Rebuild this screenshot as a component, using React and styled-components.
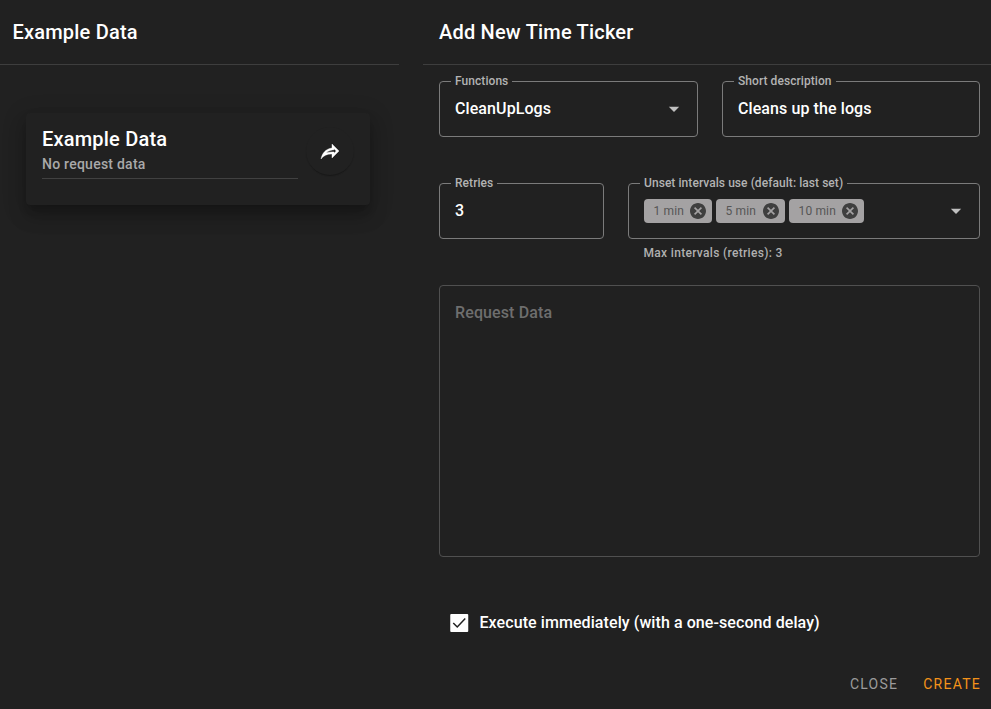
import React, { useState } from "react";
import styled, { createGlobalStyle } from "styled-components";

const GlobalStyle = createGlobalStyle`
  *, *::before, *::after { box-sizing: border-box; }
  body {
    margin: 0;
    background: #212121;
    color: #fff;
    font-family: Roboto, "Liberation Sans", sans-serif;
    overflow: hidden;
  }
`;

const Dialog = styled.main`
  display: grid;
  grid-template-columns: 399px 568px;
  column-gap: 24px;
  height: 709px;
  background: #212121;
`;

const Panel = styled.section`
  display: flex;
  flex-direction: column;
`;

const PanelHeader = styled.header`
  display: flex;
  align-items: center;
  height: 65px;
  padding: 0 ${(p) => p.$inset}px;
  border-bottom: 1px solid #3e3e3e;
`;

const Title = styled.h2`
  margin: 0;
  font-size: 20px;
  line-height: 32px;
  font-weight: 500;
  letter-spacing: 0.2px;
`;

const ExampleCard = styled.article`
  display: flex;
  align-items: flex-start;
  width: 344px;
  height: 92px;
  margin: 48px 0 0 26px;
  padding: 10px 16px;
  border-radius: 4px;
  background: #212121;
  box-shadow: 0 7px 8px -4px rgba(0, 0, 0, 0.2), 0 12px 17px 2px rgba(0, 0, 0, 0.14),
    0 5px 22px 4px rgba(0, 0, 0, 0.12);
`;

const ExampleText = styled.div`
  width: 256px;
  height: 56px;
  border-bottom: 1px solid #414141;
`;

const Subtitle = styled.p`
  margin: -1px 0 0;
  font-size: 14px;
  line-height: 20px;
  font-weight: 500;
  letter-spacing: 0.25px;
  color: #a9a9a9;
`;

const ShareButton = styled.button`
  display: grid;
  place-items: center;
  width: 48px;
  height: 48px;
  margin: 4px 0 0 8px;
  padding: 0;
  border: 0;
  border-radius: 50%;
  background: #212121;
  color: #fff;
  box-shadow: 0 2px 1px -1px rgba(0, 0, 0, 0.2), 0 1px 1px rgba(0, 0, 0, 0.1);
`;

const Form = styled.form`
  display: flex;
  flex-direction: column;
  padding: 16px 11px 0 16px;
`;

const FieldRow = styled.div`
  display: grid;
  grid-template-columns: ${(p) => p.$columns};
  column-gap: 24px;
  margin-bottom: 46px;
`;

const Field = styled.div`
  position: relative;
  display: flex;
  align-items: center;
  height: 56px;
  padding: 0 11px 0 15px;
  border: 1px solid #7b7b7b;
  border-radius: 4px;
`;

const FieldLabel = styled.label`
  position: absolute;
  top: -9px;
  left: 11px;
  padding: 0 4px;
  background: #212121;
  color: #b3b3b3;
  font-size: 12px;
  line-height: 16px;
  font-weight: 500;
  letter-spacing: 0.06px;
  white-space: nowrap;
`;

const FieldValue = styled.span`
  flex: 1;
  font-size: 16px;
  line-height: 24px;
  font-weight: 500;
  letter-spacing: 0.09px;
`;

const Caret = styled.svg`
  display: block;
  flex: none;
  width: 24px;
  height: 24px;
  fill: #c0c0c0;
`;

const Chips = styled.div`
  display: flex;
  flex: 1;
  gap: 4px;
`;

const Chip = styled.span`
  display: flex;
  align-items: center;
  justify-content: space-between;
  width: ${(p) => p.$width}px;
  height: 24px;
  padding: 0 6px 0 9.5px;
  border-radius: 4px;
  background: #a4a2a3;
  color: #565656;
  font-size: 12px;
  line-height: 20px;
  letter-spacing: 0.15px;
`;

const ChipIcon = styled.svg`
  width: 16px;
  height: 16px;
  fill: #3f3f3f;
`;

const Hint = styled.p`
  margin: -40px 0 0;
  padding-left: 204.5px;
  font-size: 12px;
  line-height: 16px;
  font-weight: 500;
  letter-spacing: 0.32px;
  color: #b0b0b0;
`;

const RequestArea = styled.textarea`
  display: block;
  width: 100%;
  height: 272px;
  margin: 24px 0 0;
  padding: 15px;
  border: 1px solid #505050;
  border-radius: 4px;
  background: transparent;
  color: #fff;
  font: 500 16px/24px Roboto, sans-serif;
  letter-spacing: 0.12px;
  resize: none;
  outline: none;
  &::placeholder { color: #6e6e6e; opacity: 1; }
`;

const CheckRow = styled.label`
  display: flex;
  align-items: center;
  gap: 8px;
  height: 24px;
  margin: 54px 0 0 8px;
  font-size: 16px;
  font-weight: 500;
`;

const CheckIcon = styled.svg`
  width: 24.5px;
  height: 24px;
`;

const CheckText = styled.span`
  line-height: 24px;
  letter-spacing: 0.08px;
`;

const Actions = styled.footer`
  display: flex;
  justify-content: flex-end;
  gap: 26px;
  margin: 37px 11px 0 0;
`;

const ActionButton = styled.button`
  padding: 0;
  border: 0;
  background: none;
  color: ${(p) => p.$color};
  font: 400 14px/24px Roboto, sans-serif;
  letter-spacing: 1.25px;
  margin-right: -1px;
`;

function DropdownCaret() {
  return (
    <Caret viewBox="0 0 24 24"><path d="M6.8,9.7L12,15L17.2,9.7H6.8Z" /></Caret>
  );
}

const intervals = [
  { label: "1 min", width: 68 },
  { label: "5 min", width: 69 },
  { label: "10 min", width: 75 },
];

export default function App() {
  const [request, setRequest] = useState("");
  return (
    <>
      <GlobalStyle />
      <Dialog>
        <Panel>
          <PanelHeader $inset={12.5}><Title>Example Data</Title></PanelHeader>
          <ExampleCard>
            <ExampleText>
              <Title>Example Data</Title>
              <Subtitle>No request data</Subtitle>
            </ExampleText>
            <ShareButton type="button" aria-label="Use example">
              <svg width="24" height="24" viewBox="0 0 24 24" fill="currentColor" stroke="currentColor" strokeWidth="0.4">
                <path d="M14,5V9C7,10 4,15 3,20C5.5,16.5 9,14.9 14,14.9V19L21,12L14,5M16,9.83L18.17,12L16,14.17V12.9H14C11.93,12.9 10.07,13.28 8.34,13.85C9.74,12.46 11.54,11.37 14.28,11L16,10.73V9.83Z" />
              </svg>
            </ShareButton>
          </ExampleCard>
        </Panel>
        <Panel>
          <PanelHeader $inset={16}><Title>Add New Time Ticker</Title></PanelHeader>
          <Form>
            <FieldRow $columns="259px 258px">
              <Field>
                <FieldLabel>Functions</FieldLabel>
                <FieldValue>CleanUpLogs</FieldValue>
                <DropdownCaret />
              </Field>
              <Field>
                <FieldLabel>Short description</FieldLabel>
                <FieldValue>Cleans up the logs</FieldValue>
              </Field>
            </FieldRow>
            <FieldRow $columns="165px 352px">
              <Field>
                <FieldLabel>Retries</FieldLabel>
                <FieldValue>3</FieldValue>
              </Field>
              <Field>
                <FieldLabel>Unset intervals use (default: last set)</FieldLabel>
                <Chips>
                  {intervals.map((i) => (
                    <Chip key={i.label} $width={i.width}>
                      {i.label}
                      <ChipIcon viewBox="2 2 20 20">
                        <path d="M12,2C17.53,2 22,6.47 22,12C22,17.53 17.53,22 12,22C6.47,22 2,17.53 2,12C2,6.47 6.47,2 12,2M15.59,7L12,10.59L8.41,7L7,8.41L10.59,12L7,15.59L8.41,17L12,13.41L15.59,17L17,15.59L13.41,12L17,8.41L15.59,7Z" />
                      </ChipIcon>
                    </Chip>
                  ))}
                </Chips>
                <DropdownCaret />
              </Field>
            </FieldRow>
            <Hint>Max intervals (retries): 3</Hint>
            <RequestArea
              placeholder="Request Data"
              value={request}
              onChange={(e) => setRequest(e.target.value)}
            />
            <CheckRow>
              <CheckIcon viewBox="0 0 24 24">
                <rect x="3" y="3" width="18" height="18" rx="1" fill="#fff" />
                <path d="M6 12l4 4 8-8.5" fill="none" stroke="#212121" strokeWidth="1.5" />
              </CheckIcon>
              <CheckText>Execute immediately (with a one-second delay)</CheckText>
            </CheckRow>
          </Form>
          <Actions>
            <ActionButton type="button" $color="#9b9b9b">CLOSE</ActionButton>
            <ActionButton type="button" $color="#f4931a">CREATE</ActionButton>
          </Actions>
        </Panel>
      </Dialog>
    </>
  );
}
